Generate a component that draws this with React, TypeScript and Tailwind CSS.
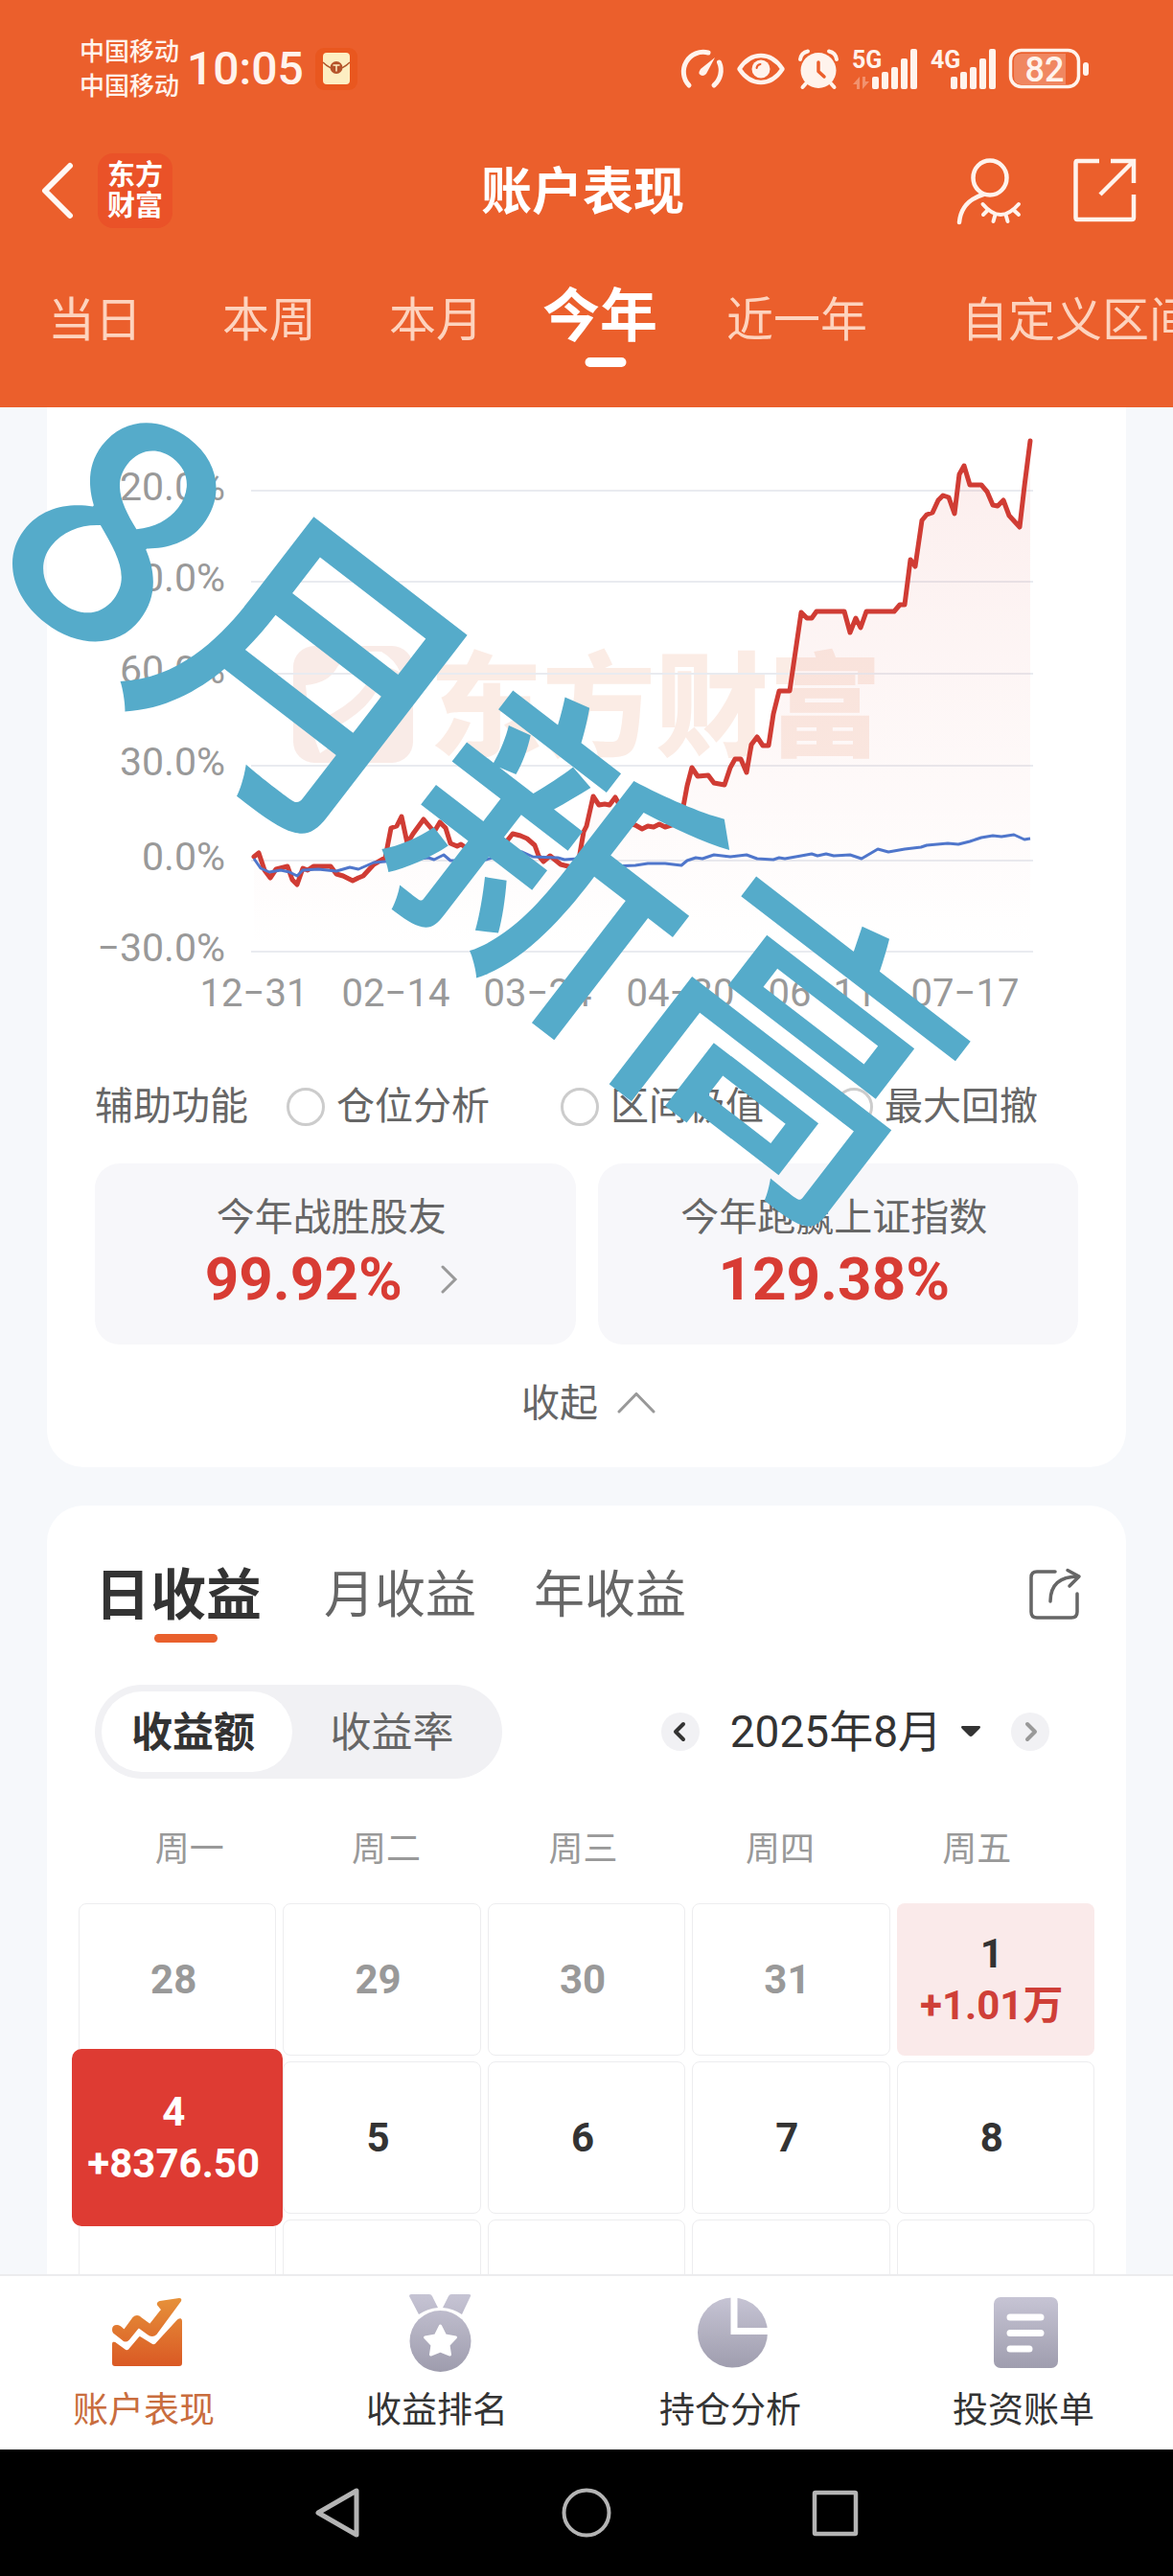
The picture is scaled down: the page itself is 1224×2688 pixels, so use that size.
import { useState } from "react";
import type { ReactNode } from "react";

const CREAM = "#fff3ec";

/* ---------- status bar ---------- */

function GaugeIcon() {
  return (
    <svg viewBox="713 51 48 44" className="h-11 w-12" fill="none" stroke={CREAM} strokeWidth="5" strokeLinecap="round">
      <path d="M724 90 A20.500 20.500 0 0 1 744 56" />
      <path d="M755.500 66 A20.500 20.500 0 0 1 750 90" />
      <path d="M751 61 L742 78 Q738 82 734.500 78 Q734 76 736 73 Z" fill={CREAM} stroke="none" />
    </svg>
  );
}

function EyeIcon() {
  return (
    <svg viewBox="773 55 52 36" className="h-9 w-[52px]" fill="none" stroke={CREAM} strokeLinecap="round">
      <path d="M776.500 73 C783 63 791 59 799 59 C807 59 815 63 821.500 73 C815 83 807 87 799 87 C791 87 783 83 776.500 73 Z" strokeWidth="4.500" strokeLinejoin="round" />
      <circle cx="799" cy="73" r="9.500" fill={CREAM} stroke="none" />
      <path d="M794.500 72 Q795 68.500 798.500 68" stroke="#eb5f2c" strokeWidth="2" />
    </svg>
  );
}

function AlarmIcon() {
  return (
    <svg viewBox="838 51 44 44" className="size-11" fill="none" stroke={CREAM} strokeLinecap="round">
      <circle cx="860" cy="74.500" r="18.500" fill={CREAM} stroke="none" />
      <path d="M841 63 Q842 56 849 54.500" strokeWidth="4" />
      <path d="M879 63 Q878 56 871 54.500" strokeWidth="4" />
      <path d="M847 88 L843.500 92 M873 88 L876.500 92" strokeWidth="4" />
      <path d="M860 66 V75.500 L866 81" stroke="#eb5f2c" strokeWidth="3.500" strokeLinejoin="round" />
    </svg>
  );
}

function SignalIcon({ label, data }: { label: string; data?: boolean }) {
  return (
    <svg viewBox="-2 -7 70 56" className="h-14 w-[70px]" fill={CREAM}>
      <text x="-1" y="20" fontSize="25" fontWeight="700" className="font-[Roboto]">{label}</text>
      {data && <path d="M0 37 L7 29 V42 H4 V37 Z M17 34 L10 42 V29 H13 V34 Z" opacity="0.35" />}
      <rect x="20" y="29" width="7" height="13" rx="2" />
      <rect x="30" y="24" width="7" height="18" rx="2" />
      <rect x="40" y="19" width="7" height="23" rx="2" />
      <rect x="50" y="10" width="7" height="32" rx="2" />
      <rect x="60" y="0" width="7" height="42" rx="2" />
    </svg>
  );
}

function BatteryIcon() {
  return (
    <svg viewBox="1052 50 84 44" className="h-11 w-[84px]">
      <path d="M1066 56 H1112 V88 H1066 Q1058 88 1058 80 V64 Q1058 56 1066 56 Z" fill="#fff" opacity="0.25" />
      <rect x="1054.500" y="52.500" width="71" height="38" rx="11" fill="none" stroke={CREAM} strokeWidth="3.500" />
      <rect x="1130" y="65" width="6" height="14" rx="3" fill={CREAM} />
      <text x="1090" y="85" fontSize="36" fontWeight="500" textAnchor="middle" fill={CREAM} className="font-[Roboto]">82</text>
    </svg>
  );
}

function EnvelopeIcon() {
  return (
    <svg viewBox="330 51 44 44" className="size-11">
      <rect x="330" y="51" width="44" height="44" rx="9" fill="#e9571f" />
      <rect x="338" y="56" width="28" height="33" rx="4" fill="#fdeec2" />
      <path d="M338 66 Q352 80 366 66" fill="none" stroke="#b0562a" strokeWidth="1.500" />
      <circle cx="352" cy="71.500" r="6.500" fill="#b5532a" />
      <path d="M348.500 69 H355.500 M352 69 V75.500" stroke="#fdeec2" strokeWidth="1.500" />
    </svg>
  );
}

/* ---------- header ---------- */

function HiddenUserIcon() {
  return (
    <svg viewBox="998 160 70 74" className="h-[74px] w-[70px]" fill="none" stroke={CREAM} strokeWidth="4.500" strokeLinecap="round" strokeLinejoin="round">
      <ellipse cx="1033" cy="183.500" rx="17.500" ry="18" />
      <path d="M1026 201 Q1003 208 1001 230" />
      <path d="M1025.500 211 Q1044 233 1063 211" strokeWidth="4" />
      <path d="M1031 217 L1026 222 M1038.500 222 L1036.500 229 M1049.500 222 L1051.500 229 M1057.500 217 L1063 222" strokeWidth="4" />
    </svg>
  );
}

function ExportIcon() {
  return (
    <svg viewBox="1118 164 70 70" className="size-[70px]" fill="none" stroke={CREAM} strokeWidth="4.500" strokeLinejoin="round">
      <path d="M1147 168 H1124 Q1122.500 168 1122.500 170 V227 Q1122.500 229 1124 229 H1181 Q1183 229 1183 227 V203" />
      <path d="M1159 168 H1183 V191" strokeLinejoin="miter" />
      <path d="M1182 169 L1148 203" />
    </svg>
  );
}

const periods = [
  { name: "当日", gap: "" },
  { name: "本周", gap: "ml-[84px]" },
  { name: "本月", gap: "ml-[76px]" },
  { name: "今年", gap: "ml-[62px]" },
  { name: "近一年", gap: "ml-[72px]" },
  { name: "自定义区间", gap: "ml-[98px]" },
];

function Header() {
  const [period, setPeriod] = useState("今年");
  return (
    <header className="shrink-0 overflow-hidden bg-[#eb5f2c] text-white">
      <div className="flex h-36 items-center pr-[88px] pl-[83px] text-[#fff3ec]">
        <div className="text-[26px] leading-9 font-medium">
          <div>中国移动</div>
          <div>中国移动</div>
        </div>
        <time className="ml-2 text-5xl font-medium">10:05</time>
        <span className="ml-3"><EnvelopeIcon /></span>
        <div className="ml-auto flex items-center gap-3">
          <GaugeIcon />
          <EyeIcon />
          <AlarmIcon />
          <SignalIcon label="5G" data />
          <SignalIcon label="4G" />
          <BatteryIcon />
        </div>
      </div>

      <div className="grid h-[110px] grid-cols-[1fr_auto_1fr] items-center pr-9 pl-[42px]">
        <div className="flex items-center gap-6">
          <button type="button" aria-label="返回">
            <svg viewBox="0 0 36 60" className="h-[60px] w-9" fill="none" stroke="#fff8f4" strokeWidth="6" strokeLinecap="round" strokeLinejoin="round">
              <path d="M31 4 L5 30 L31 56" />
            </svg>
          </button>
          <div className="flex size-[78px] flex-col items-center justify-center rounded-2xl bg-[#ea5228] text-[29px] leading-8 font-bold">
            <span>东方</span>
            <span>财富</span>
          </div>
        </div>
        <h1 className="pt-1 pr-3.5 text-[53px] leading-[60px] font-bold">账户表现</h1>
        <div className="flex items-center justify-end gap-[50px]">
          <button type="button" aria-label="隐私"><HiddenUserIcon /></button>
          <button type="button" aria-label="分享"><ExportIcon /></button>
        </div>
      </div>

      <nav className="flex h-[171px] items-baseline pt-[41px] pl-[50px] leading-[72px] whitespace-nowrap">
        {periods.map((p) => (
          <button
            key={p.name}
            type="button"
            onClick={() => setPeriod(p.name)}
            className={`relative shrink-0 ${p.gap} ${p.name === period ? "text-[60px] font-bold text-white" : "text-[49px] text-[#fdd3be]"}`}
          >
            {p.name}
            {p.name === period && <span className="absolute -bottom-4 left-1/2 ml-1.5 h-2.5 w-[43px] -translate-x-1/2 rounded-full bg-white" />}
          </button>
        ))}
      </nav>
    </header>
  );
}

/* ---------- chart ---------- */

const redLine =
  "265,894 270,890 276,908 282,916 288,907 300,904 305,918 310,923 316,906 321,908 327,904 345,904 351,912 358,914 368,919 374,916 379,914 390,902 402,895 408,864 414,862 419,852 425,880 431,870 442,855 453,868 459,858 465,864 470,880 477,883 481,881 487,885 503,876 515,884 527,880 535,870 543,872 550,875 558,882 562,893 567,899 574,893 585,902 597,905 604,897 609,868 612,862 619,831 625,840 631,839 636,840 642,832 647,841 655,859 663,861 670,865 676,862 682,863 688,860 694,863 704,860 712,847 717,820 722,801 728,810 739,809 745,817 756,819 762,801 767,792 773,792 779,806 784,777 790,769 796,778 802,778 807,745 813,721 824,721 836,639 842,645 847,645 852,638 881,638 887,660 893,645 898,655 904,638 933,638 939,631 944,631 950,584 955,591 962,543 967,537 973,535 979,522 984,517 990,519 996,536 1001,495 1006,486 1012,506 1024,506 1030,513 1036,527 1041,528 1047,522 1053,538 1064,550 1069,507 1075,460";

const blueLine =
  "265,896 272,906 281,910 293,908 302,910 310,914 316,908 332,907 351,909 365,905 374,907 390,900 402,899 429,897 447,895 453,897 463,892 470,898 484,898 507,897 537,888 545,889 556,894 582,895 589,897 603,896 612,901 639,904 663,903 676,901 694,901 711,903 717,898 726,895 733,896 745,892 762,894 779,892 790,896 807,897 813,895 819,896 836,893 847,891 853,893 862,891 870,893 887,892 899,896 916,886 927,889 944,886 961,884 967,882 989,880 1000,881 1012,878 1024,874 1036,872 1045,873 1058,871 1069,876 1075,875";

const yAxis = [
  { y: 512, label: "120.0%" },
  { y: 607, label: "90.0%" },
  { y: 703, label: "60.0%" },
  { y: 799, label: "30.0%" },
  { y: 898, label: "0.0%" },
  { y: 993, label: "−30.0%" },
];

const xAxis = [
  { x: 265, label: "12−31" },
  { x: 413, label: "02−14" },
  { x: 561, label: "03−24" },
  { x: 710, label: "04−30" },
  { x: 858, label: "06−11" },
  { x: 1007, label: "07−17" },
];

function ProfitChart() {
  return (
    <svg viewBox="49 425 1126 650" className="block w-full" role="img" aria-label="今年收益率走势">
      <defs>
        <linearGradient id="area" x1="0" y1="460" x2="0" y2="993" gradientUnits="userSpaceOnUse">
          <stop offset="0" stopColor="#da3c32" stopOpacity="0.09" />
          <stop offset="1" stopColor="#da3c32" stopOpacity="0" />
        </linearGradient>
      </defs>
      <rect x="306" y="674" width="125" height="122" rx="22" fill="#f9ebe7" />
      <path d="M319 715 Q343 713 352 696 Q364 678 398 680 Q412 688 418 702 Q404 692 388 700 Q380 732 323 756 Z" fill="#fff" />
      <path d="M328 770 Q392 742 398 706 Q402 748 352 774 Q340 782 334 786 Z" fill="#fff" />
      <text x="448" y="780" fontSize="118" fontWeight="900" fill="#fbece5">东方财富</text>
      {yAxis.map((t) => (
        <g key={t.label}>
          <line x1="262" x2="1078" y1={t.y} y2={t.y} stroke="#e9ebf0" strokeWidth="2" />
          <text x="235" y={t.y + 10} fontSize="41" textAnchor="end" fill="#999">{t.label}</text>
        </g>
      ))}
      <polygon points={`265,993 ${redLine} 1075,993`} fill="url(#area)" />
      <polyline points={redLine} fill="none" stroke="#d03c34" strokeWidth="5" strokeLinejoin="round" strokeLinecap="round" />
      <polyline points={blueLine} fill="none" stroke="#4f76cb" strokeWidth="3" strokeLinejoin="round" />
      {xAxis.map((t) => (
        <text key={t.label} x={t.x} y="1050" fontSize="40" textAnchor="middle" fill="#999">{t.label}</text>
      ))}
    </svg>
  );
}

function StatCard({ title, value, arrow }: { title: string; value: string; arrow?: boolean }) {
  return (
    <div className="flex h-[189px] flex-1 flex-col items-center justify-center rounded-[26px] bg-[#f7f7fa] pr-2 pb-1.5">
      <div className="text-[40px] leading-[58px] text-[#666]">{title}</div>
      <div className="flex items-center gap-10 text-[62px] leading-[70px] font-bold text-[#d83c34]">
        {value}
        {arrow && (
          <svg viewBox="0 0 18 30" className="h-[30px] w-[18px]" fill="none" stroke="#999" strokeWidth="3" strokeLinecap="round">
            <path d="M2 2 L15 15 L2 28" />
          </svg>
        )}
      </div>
    </div>
  );
}

function ChartCard() {
  return (
    <section className="relative rounded-b-[38px] bg-white pb-[46px]">
      <ProfitChart />
      <fieldset className="mt-[60px] flex h-10 items-center px-[50px] text-[40px] leading-10 text-[#666]">
        <span className="-mr-[34px]">辅助功能</span>
        {["仓位分析", "区间极值", "最大回撤"].map((name) => (
          <label key={name} className="ml-[74px] flex items-center gap-3">
            <input type="radio" name="assist" className="size-10 appearance-none rounded-full border-3 border-[#ccc] bg-white checked:border-[#eb5f2c]" />
            {name}
          </label>
        ))}
      </fieldset>
      <div className="mt-[39px] flex gap-[23px] px-[50px]">
        <StatCard title="今年战胜股友" value="99.92%" arrow />
        <StatCard title="今年跑赢上证指数" value="129.38%" />
      </div>
      <button type="button" className="mx-auto mt-[42px] flex h-10 items-center gap-5 pl-1 text-[40px] leading-10 text-[#666]">
        收起
        <svg viewBox="0 0 40 24" className="h-6 w-10" fill="none" stroke="#999" strokeWidth="3" strokeLinecap="round">
          <path d="M2 20 L20 1.500 L38 20" />
        </svg>
      </button>
      <div className="pointer-events-none absolute top-[404px] left-[466px] z-10 -translate-x-1/2 -translate-y-1/2 rotate-[37.6deg] font-['Noto_Sans_CJK_SC',sans-serif] text-[320px] leading-none font-medium whitespace-nowrap text-[#55abca]">
        8月新高
      </div>
    </section>
  );
}

/* ---------- calendar ---------- */

type Day = { day: string; tone?: "past" | "gain" | "selected"; amount?: string };

const days: Day[] = [
  { day: "28", tone: "past" },
  { day: "29", tone: "past" },
  { day: "30", tone: "past" },
  { day: "31", tone: "past" },
  { day: "1", tone: "gain", amount: "+1.01万" },
  { day: "4", tone: "selected", amount: "+8376.50" },
  { day: "5" },
  { day: "6" },
  { day: "7" },
  { day: "8" },
  { day: "" },
  { day: "" },
  { day: "" },
  { day: "" },
  { day: "" },
];

function DayCell({ day, tone, amount }: Day) {
  const base = "relative flex h-[159px] flex-col items-center justify-center rounded-lg pr-2 text-[42px] leading-[54px] font-bold";
  if (tone === "selected") {
    return (
      <button type="button" className={`${base} z-10 text-white`}>
        <span className="absolute -inset-x-[7px] -inset-y-[13px] rounded-[10px] bg-[#de3b33]" />
        <span className="relative">{day}</span>
        <span className="relative">{amount}</span>
      </button>
    );
  }
  if (tone === "gain") {
    return (
      <button type="button" className={`${base} bg-[#faeaea] text-[#333]`}>
        <span>{day}</span>
        <span className="text-[#cf3f38]">{amount}</span>
      </button>
    );
  }
  return (
    <button type="button" className={`${base} border border-[#ededef] ${tone === "past" ? "text-[#999]" : "text-[#333]"}`}>
      {day}
    </button>
  );
}

function RoundButton({ label, d, color }: { label: string; d: string; color: string }) {
  return (
    <button type="button" aria-label={label} className="flex size-10 items-center justify-center rounded-full bg-[#f1f1f4]">
      <svg viewBox="0 0 40 40" className="size-10" fill="none" stroke={color} strokeWidth="4" strokeLinecap="round" strokeLinejoin="round">
        <path d={d} />
      </svg>
    </button>
  );
}

function CalendarCard() {
  const [unit, setUnit] = useState("收益额");
  return (
    <section className="mt-10 rounded-t-[38px] bg-white pt-[62px]">
      <div className="flex h-16 items-center pr-[46px] pl-[50px] text-[53px] leading-[64px] text-[#666]">
        <button type="button" className="relative text-[58px] font-bold text-[#333]">
          日收益
          <span className="absolute top-[72px] left-[62px] h-[9px] w-[66px] rounded-full bg-[#e9602d]" />
        </button>
        <button type="button" className="ml-[65px]">月收益</button>
        <button type="button" className="ml-[60px]">年收益</button>
        <button type="button" aria-label="分享收益" className="mb-1 ml-auto">
          <svg viewBox="1072 1632 57 58" className="h-[58px] w-[57px]" fill="none" stroke="#666" strokeWidth="3.500" strokeLinecap="round" strokeLinejoin="round">
            <path d="M1101 1638 H1082 Q1076 1638 1076 1644 V1680 Q1076 1686 1082 1686 H1118 Q1124 1686 1124 1680 V1661" />
            <path d="M1096 1669 Q1096 1643 1125 1643" />
            <path d="M1114 1636.500 L1126 1643 L1116 1653" />
          </svg>
        </button>
      </div>

      <div className="mt-[61px] flex items-center justify-between pr-20 pl-[50px]">
        <div className="flex h-[98px] w-[425px] rounded-full bg-[#f1f1f4] p-[7px] text-[43px] leading-[86px]">
          {["收益额", "收益率"].map((name) => (
            <button
              key={name}
              type="button"
              onClick={() => setUnit(name)}
              className={name === unit ? "w-[199px] rounded-full bg-white pr-2 font-bold text-[#333]" : "grow pr-1 text-[#666]"}
            >
              {name}
            </button>
          ))}
        </div>
        <div className="flex items-center">
          <RoundButton label="上个月" d="M23 12 L15 20 L23 28" color="#333" />
          <button type="button" className="mr-8 ml-8 flex items-center gap-5 text-[46px] leading-[60px] text-[#333]">
            2025年8月
            <svg viewBox="0 0 20 12" className="h-3 w-5" fill="#333">
              <path d="M1 0 H19 Q21 1 19 3 L12 10 Q10 12 8 10 L1 3 Q-1 1 1 0 Z" />
            </svg>
          </button>
          <RoundButton label="下个月" d="M17 12 L25 20 L17 28" color="#999" />
        </div>
      </div>

      <div className="mt-[54px] grid grid-cols-5 pr-[53px] pl-[46px] text-center text-4xl leading-10 text-[#999]">
        {["周一", "周二", "周三", "周四", "周五"].map((d) => (
          <span key={d}>{d}</span>
        ))}
      </div>
      <div className="mt-9 grid grid-cols-5 gap-x-[7px] gap-y-1.5 px-[33px]">
        {days.map((d, i) => (
          <DayCell key={i} {...d} />
        ))}
      </div>
    </section>
  );
}

/* ---------- bottom navigation ---------- */

function GreyGradient({ id, y1, y2 }: { id: string; y1: number; y2: number }) {
  return (
    <linearGradient id={id} x1="0" y1={y1} x2="0" y2={y2} gradientUnits="userSpaceOnUse">
      <stop offset="0" stopColor="#c6c4d4" />
      <stop offset="1" stopColor="#9f9dae" />
    </linearGradient>
  );
}

function TrendIcon() {
  return (
    <svg viewBox="113 2392 80 84" className="h-[84px] w-20">
      <defs>
        <linearGradient id="trend" x1="0" y1="2398" x2="0" y2="2469" gradientUnits="userSpaceOnUse">
          <stop offset="0" stopColor="#e6913a" />
          <stop offset="1" stopColor="#da5924" />
        </linearGradient>
      </defs>
      <g fill="url(#trend)" stroke="url(#trend)" strokeWidth="2" strokeLinejoin="round">
        <path d="M118 2431 Q118 2427 122 2427 Q125 2427 129.500 2432 L139 2419 Q143 2415 147 2419 L156.500 2426 L169 2410 L165 2405 Q164 2403 167 2402 L187 2399 Q189 2399 188 2401 L163 2435 Q159 2439 154 2435 L144.500 2428 L134 2441 Q131 2444 128 2441 L119 2434 Q118 2433 118 2431 Z" />
        <path d="M118 2446 Q118 2444 120 2445 L131 2453 Q133 2454 135 2452 L146 2439 L159 2447 Q161 2448 163 2446 L186 2421 Q189 2419 189 2422 V2466 Q189 2468 187 2468 H120 Q118 2468 118 2466 Z" />
      </g>
    </svg>
  );
}

function MedalIcon() {
  return (
    <svg viewBox="420 2392 80 84" className="h-[84px] w-20">
      <defs><GreyGradient id="medal" y1={2394} y2={2474} /></defs>
      <g fill="url(#medal)">
        <path d="M430 2394 H449 Q451 2394 452 2396 L458 2408 Q447 2409 438 2415 L428 2396 Q428 2394 430 2394 Z" />
        <path d="M490 2394 H472 Q470 2394 469 2396 L463 2408 Q474 2409 483 2415 L492 2396 Q493 2394 490 2394 Z" />
        <circle cx="460.500" cy="2443" r="32" />
      </g>
      <path d="M460.500 2427 L465.500 2437 L476.500 2439 L469 2447 L470.500 2457 L460.500 2453 L450.500 2457 L452 2447 L444.500 2439 L455.500 2437 Z" fill="#fff" stroke="#fff" strokeWidth="3" strokeLinejoin="round" />
    </svg>
  );
}

function PieIcon() {
  return (
    <svg viewBox="726 2392 80 84" className="h-[84px] w-20">
      <defs><GreyGradient id="pie" y1={2397} y2={2471} /></defs>
      <circle cx="765.500" cy="2434" r="36.500" fill="url(#pie)" />
      <path d="M767 2394 V2432.500 H804" fill="none" stroke="#fff" strokeWidth="7" />
    </svg>
  );
}

function BillIcon() {
  return (
    <svg viewBox="1032 2392 80 84" className="h-[84px] w-20">
      <defs><GreyGradient id="bill" y1={2397} y2={2471} /></defs>
      <rect x="1038" y="2397" width="67" height="74" rx="7" fill="url(#bill)" />
      <path d="M1055 2418 H1087 M1055 2434.500 H1087 M1055 2451 H1075" stroke="#fff" strokeWidth="7" strokeLinecap="round" />
    </svg>
  );
}

const sections: { name: string; icon: ReactNode }[] = [
  { name: "账户表现", icon: <TrendIcon /> },
  { name: "收益排名", icon: <MedalIcon /> },
  { name: "持仓分析", icon: <PieIcon /> },
  { name: "投资账单", icon: <BillIcon /> },
];

function BottomNav() {
  return (
    <nav className="z-20 grid h-[183px] shrink-0 grid-cols-4 border-t-2 border-[#ececee] bg-white text-[37px] leading-[44px] text-[#333]">
      {sections.map((s, i) => (
        <a key={s.name} href="#" className={`flex flex-col items-center pt-[17px] ${i === 0 ? "text-[#c96d3e]" : ""}`}>
          {s.icon}
          <span className="mt-[18px] pr-1.5">{s.name}</span>
        </a>
      ))}
    </nav>
  );
}

function SystemNav() {
  return (
    <div className="flex h-[132px] shrink-0 items-center justify-center gap-[206px] bg-black">
      <button type="button" aria-label="返回">
        <svg viewBox="0 0 54 56" className="h-14 w-[54px]" fill="none" stroke="#b4b4b4" strokeWidth="5" strokeLinejoin="round">
          <path d="M47 5 V51 L7 28 Z" />
        </svg>
      </button>
      <button type="button" aria-label="主页">
        <svg viewBox="0 0 54 56" className="h-14 w-[54px]" fill="none" stroke="#b4b4b4" strokeWidth="4">
          <circle cx="27" cy="28" r="23.500" />
        </svg>
      </button>
      <button type="button" aria-label="最近任务">
        <svg viewBox="0 0 54 56" className="h-14 w-[54px]" fill="none" stroke="#b4b4b4" strokeWidth="4.500" strokeLinejoin="round">
          <rect x="5" y="7" width="43" height="43" rx="1" />
        </svg>
      </button>
    </div>
  );
}

export default function App() {
  return (
    <div className="flex h-screen flex-col overflow-hidden bg-[#f6f8fb] font-[Roboto,'Noto_Sans_CJK_SC',sans-serif]">
      <Header />
      <main className="min-h-0 flex-1 overflow-hidden px-[49px]">
        <ChartCard />
        <CalendarCard />
      </main>
      <BottomNav />
      <SystemNav />
    </div>
  );
}
